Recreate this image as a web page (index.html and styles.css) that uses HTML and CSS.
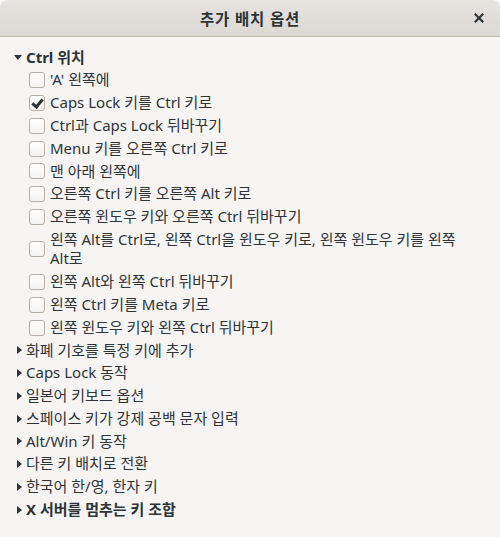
FILE: index.html
```html
<!DOCTYPE html>
<html lang="ko">
<head>
  <meta charset="UTF-8"/>
  <meta name="viewport" content="width=device-width, initial-scale=1.0"/>
  <title>추가 배치 옵션</title>
  <link rel="stylesheet" href="styles.css">
</head>
<body>
  <div class="window">
    <header class="titlebar">
      <span class="title">추가 배치 옵션</span>
      <button class="close" title="닫기">
        <svg width="10" height="10" viewBox="0 0 10 10">
          <path d="M1.5 1.5 L8.5 8.5 M8.5 1.5 L1.5 8.5" stroke="#2e3436" stroke-width="2.2" stroke-linecap="square"/>
        </svg>
      </button>
    </header>

    <div class="content">
      <ul class="tree">
        <li class="group open">
          <div class="group-row bold"><span class="arrow down"></span>Ctrl 위치</div>
          <ul class="options">
            <li class="option"><span class="check"></span><span class="label">'A' 왼쪽에</span></li>
            <li class="option"><span class="check checked"></span><span class="label">Caps Lock 키를 Ctrl 키로</span></li>
            <li class="option"><span class="check"></span><span class="label">Ctrl과 Caps Lock 뒤바꾸기</span></li>
            <li class="option"><span class="check"></span><span class="label">Menu 키를 오른쪽 Ctrl 키로</span></li>
            <li class="option"><span class="check"></span><span class="label">맨 아래 왼쪽에</span></li>
            <li class="option"><span class="check"></span><span class="label">오른쪽 Ctrl 키를 오른쪽 Alt 키로</span></li>
            <li class="option"><span class="check"></span><span class="label">오른쪽 윈도우 키와 오른쪽 Ctrl 뒤바꾸기</span></li>
            <li class="option"><span class="check"></span><span class="label">왼쪽 Alt를 Ctrl로, 왼쪽 Ctrl을 윈도우 키로, 왼쪽 윈도우 키를 왼쪽 Alt로</span></li>
            <li class="option"><span class="check"></span><span class="label">왼쪽 Alt와 왼쪽 Ctrl 뒤바꾸기</span></li>
            <li class="option"><span class="check"></span><span class="label">왼쪽 Ctrl 키를 Meta 키로</span></li>
            <li class="option"><span class="check"></span><span class="label">왼쪽 윈도우 키와 왼쪽 Ctrl 뒤바꾸기</span></li>
          </ul>
        </li>
        <li class="group"><div class="group-row"><span class="arrow"></span>화폐 기호를 특정 키에 추가</div></li>
        <li class="group"><div class="group-row"><span class="arrow"></span>Caps Lock 동작</div></li>
        <li class="group"><div class="group-row"><span class="arrow"></span>일본어 키보드 옵션</div></li>
        <li class="group"><div class="group-row"><span class="arrow"></span>스페이스 키가 강제 공백 문자 입력</div></li>
        <li class="group"><div class="group-row"><span class="arrow"></span>Alt/Win 키 동작</div></li>
        <li class="group"><div class="group-row"><span class="arrow"></span>다른 키 배치로 전환</div></li>
        <li class="group"><div class="group-row"><span class="arrow"></span>한국어 한/영, 한자 키</div></li>
        <li class="group"><div class="group-row bold"><span class="arrow"></span>X 서버를 멈추는 키 조합</div></li>
      </ul>
    </div>
  </div>
</body>
</html>
```

FILE: styles.css
```css
html, body {
  margin: 0;
  height: 100%;
  background: #fbfbfa;
}

body {
  font-family: "Noto Sans", "Noto Sans CJK KR", sans-serif;
  font-size: 15px;
  color: #2e3436;
}

.window {
  height: 100%;
  display: flex;
  flex-direction: column;
  background: #f6f5f4;
  border-radius: 8px 8px 0 0;
  overflow: hidden;
}

/* Title bar */
.titlebar {
  height: 36px;
  flex-shrink: 0;
  display: flex;
  align-items: center;
  justify-content: center;
  position: relative;
  background: linear-gradient(#e6e3e0, #dcd8d4);
  border-bottom: 1px solid #bfb8b1;
}

.title {
  font-weight: bold;
  font-size: 15.5px;
  letter-spacing: 0.8px;
}

.close {
  position: absolute;
  right: 8px;
  top: 5px;
  width: 26px;
  height: 26px;
  border: none;
  background: none;
  padding: 0;
  display: flex;
  align-items: center;
  justify-content: center;
}

/* Tree */
.content {
  padding: 9px 12px 0 12px;
}

.tree, .options {
  list-style: none;
  margin: 0;
  padding: 0;
}

.group-row {
  display: flex;
  align-items: center;
  line-height: 19.6px;
  padding: 1.6px 0;
}

.bold {
  font-weight: bold;
}

.arrow {
  width: 12px;
  height: 18px;
  margin-right: 2px;
  display: flex;
  align-items: center;
  justify-content: center;
  flex-shrink: 0;
}

.arrow::before {
  content: "";
  border-top: 4px solid transparent;
  border-bottom: 4px solid transparent;
  border-left: 5px solid #2e3436;
  margin-left: 2px;
}

.arrow.down::before {
  border-left: 4px solid transparent;
  border-right: 4px solid transparent;
  border-top: 5px solid #2e3436;
  border-bottom: none;
  margin-left: 0;
}

.options {
  padding-left: 17px;
}

.option {
  display: flex;
  align-items: center;
  line-height: 19.6px;
  padding: 1.6px 0;
}

.check {
  width: 14px;
  height: 14px;
  flex-shrink: 0;
  border: 1px solid #b6b0a9;
  border-radius: 3px;
  background: linear-gradient(#ffffff, #f4f3f2);
  margin-right: 5px;
  position: relative;
}

.check.checked::after {
  content: "";
  position: absolute;
  left: 4px;
  top: 1px;
  width: 4px;
  height: 8px;
  border-right: 3px solid #2e3436;
  border-bottom: 3px solid #2e3436;
  transform: rotate(40deg);
}

.label {
  flex: 1;
  word-break: keep-all;
}
```
